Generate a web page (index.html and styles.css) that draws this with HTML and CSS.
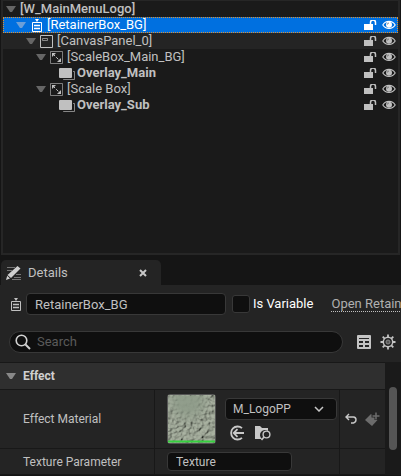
FILE: index.html
```html
<!DOCTYPE html>
<html lang="en">
<head>
<meta charset="utf-8">
<title>Widget hierarchy and details</title>
<link rel="stylesheet" href="styles.css">
</head>
<body>
<svg class="defs" aria-hidden="true">
  <symbol id="arrow" viewBox="0 0 10 7"><path d="M0 0h10L6 6H4z" fill="currentColor"/></symbol>
  <symbol id="lock" viewBox="0 0 13 11"><path d="M0 4h9v6H0z" fill="currentColor"/><path d="M6.500 4.500V2.500a2.500 2.500 0 0 1 5 0V5" fill="none" stroke="currentColor" stroke-width="1.500"/></symbol>
  <symbol id="eye" viewBox="0 0 14 10"><path d="M.8 5C3.500.2 10.500.2 13.200 5 10.500 9.500 3.500 9.500.8 5z" fill="none" stroke="currentColor" stroke-width="1.100"/><circle cx="7" cy="4.700" r="3" fill="currentColor"/><path d="M5.300 4.500q.2-1.300 1.500-1.500" stroke="#555" stroke-width=".8" fill="none"/></symbol>
  <symbol id="retainer" viewBox="0 0 13 13"><path d="M2.500 3.500h9v9h-9z" fill="none" stroke="currentColor"/><path d="M4 6.500h6M4 9.500h6" stroke="currentColor" stroke-width="1.400"/><path d="M5 0h4L7 3z" fill="currentColor"/></symbol>
  <symbol id="canvas" viewBox="0 0 13 13"><path d="M.5.500h12v12H.5z" fill="none" stroke="currentColor"/><path d="M2.500 3.500h5v2h-5z" fill="none" stroke="currentColor" stroke-width=".8" opacity=".8"/></symbol>
  <symbol id="scale" viewBox="0 0 13 13"><path d="M.5.500h12v12H.5z" fill="none" stroke="currentColor" opacity=".6"/><path d="M2 2h4L2 6zM11 11H7l4-4z" fill="currentColor"/><path d="M3 3l7 7" stroke="currentColor" stroke-dasharray="3 1.500"/></symbol>
  <symbol id="overlay" viewBox="0 0 16 13"><rect width="13" height="10" y="1" rx="1" fill="currentColor"/><path d="M14 4.500h1.500v8H4.500V12" fill="none" stroke="currentColor" opacity=".65"/></symbol>
</svg>

<section class="hierarchy" aria-label="Hierarchy">
  <div class="row level0 strong"><svg class="arrow"><use href="#arrow"/></svg><span class="name">[W_MainMenuLogo]</span></div>
  <div class="row level1 selected"><svg class="arrow"><use href="#arrow"/></svg><svg class="type"><use href="#retainer"/></svg><span class="name">[RetainerBox_BG]</span><button aria-label="Lock"><svg class="lock"><use href="#lock"/></svg></button><button aria-label="Visibility"><svg class="eye"><use href="#eye"/></svg></button></div>
  <div class="row level2 child"><svg class="arrow"><use href="#arrow"/></svg><svg class="type"><use href="#canvas"/></svg><span class="name">[CanvasPanel_0]</span><button aria-label="Lock"><svg class="lock"><use href="#lock"/></svg></button><button aria-label="Visibility"><svg class="eye"><use href="#eye"/></svg></button></div>
  <div class="row level3"><svg class="arrow"><use href="#arrow"/></svg><svg class="type"><use href="#scale"/></svg><span class="name">[ScaleBox_Main_BG]</span><button aria-label="Lock"><svg class="lock"><use href="#lock"/></svg></button><button aria-label="Visibility"><svg class="eye"><use href="#eye"/></svg></button></div>
  <div class="row leaf"><svg class="type wide"><use href="#overlay"/></svg><span class="name">Overlay_Main</span><button aria-label="Lock"><svg class="lock"><use href="#lock"/></svg></button><button aria-label="Visibility"><svg class="eye"><use href="#eye"/></svg></button></div>
  <div class="row level3"><svg class="arrow"><use href="#arrow"/></svg><svg class="type"><use href="#scale"/></svg><span class="name">[Scale Box]</span><button aria-label="Lock"><svg class="lock"><use href="#lock"/></svg></button><button aria-label="Visibility"><svg class="eye"><use href="#eye"/></svg></button></div>
  <div class="row leaf"><svg class="type wide"><use href="#overlay"/></svg><span class="name">Overlay_Sub</span><button aria-label="Lock"><svg class="lock"><use href="#lock"/></svg></button><button aria-label="Visibility"><svg class="eye"><use href="#eye"/></svg></button></div>
</section>

<section class="details" aria-label="Details">
  <header class="tab">
    <svg class="pencil" viewBox="0 0 16 16"><path d="M1 2.500h8M1 5.500h5M10 9.500h5M8 12.500h7M6 14.500h9" stroke="#777"/><path d="M11.500 1l3 2.500L5 13l-3.500-3z" fill="#d0d0d0"/><path d="M1.200 10.800L4 13.500 0 15z" fill="#d0d0d0"/></svg>
    <span class="tab-title">Details</span>
    <button aria-label="Close"><svg class="close" viewBox="0 0 8 8"><path d="M1 1l6 6M7 1L1 7" stroke="#c8c8c8" stroke-width="2"/></svg></button>
  </header>
  <div class="body">
    <div class="identity">
      <svg class="type"><use href="#retainer"/></svg>
      <input class="field widget-name" aria-label="Widget name" value="RetainerBox_BG">
      <label class="variable"><input type="checkbox">Is Variable</label>
      <a class="open" href="#retainer">Open Retain</a>
    </div>
    <div class="filter">
      <label class="search">
        <svg class="magnifier" viewBox="0 0 16 16"><circle cx="6.500" cy="6.500" r="5.300" fill="none" stroke="#d0d0d0" stroke-width="1.600"/><path d="M10.500 10.500L15 15" stroke="#d0d0d0" stroke-width="2"/></svg>
        <input type="search" placeholder="Search" aria-label="Search">
      </label>
      <button aria-label="Property matrix"><svg class="matrix" viewBox="0 0 14 14"><rect width="14" height="14" rx="1" fill="#c4c4c4"/><path d="M2 3h10v1H2zM2 6h4v2H2zM8 6h4v2H8zM2 10h4v2H2zM8 10h4v2H8z" fill="#242424"/></svg></button>
      <button aria-label="Settings"><svg class="gear" viewBox="0 0 16 16"><g stroke="#c4c4c4" fill="none"><path d="M8 .5v15M.5 8h15M2.700 2.700l10.600 10.600M13.300 2.700L2.700 13.300" stroke-width="1.800"/><circle cx="8" cy="8" r="4.700" fill="#242424" stroke-width="1.500"/><circle cx="8" cy="8" r="2" fill="#555" stroke="#888"/></g></svg></button>
    </div>
    <div class="properties">
      <div class="grid">
        <h2 class="category"><svg class="arrow"><use href="#arrow"/></svg>Effect</h2>
        <div class="property">
          <div class="label">Effect Material</div>
          <div class="value asset">
            <svg class="thumb" viewBox="0 0 48 48" role="img" aria-label="M_LogoPP thumbnail">
              <defs>
                <filter id="stone" x="0" y="0" width="100%" height="100%"><feTurbulence type="fractalNoise" baseFrequency=".28" numOctaves="3" seed="11"/><feDiffuseLighting surfaceScale="3" diffuseConstant="1.200" lighting-color="#a6ad9f"><feDistantLight azimuth="225" elevation="50"/></feDiffuseLighting></filter>
                <radialGradient id="smooth" cx=".42" cy=".12" r=".5"><stop offset=".4" stop-color="#8f9c8a" stop-opacity=".9"/><stop offset="1" stop-color="#8f9c8a" stop-opacity="0"/></radialGradient>
              </defs>
              <rect width="48" height="48" filter="url(#stone)"/><rect width="48" height="48" fill="#8b9785" opacity=".25"/><rect width="48" height="48" fill="url(#smooth)"/><path d="M0 46h48v2H0z" fill="#36d03f"/>
            </svg>
            <div class="picker">
              <select class="field" aria-label="Effect Material"><option>M_LogoPP</option></select>
              <div class="actions">
                <button aria-label="Use selected asset"><svg class="use" viewBox="0 0 16 16"><path d="M13 3.200A6.500 6.500 0 1 0 13 12.800M15 8H5M8.500 4.200L4.700 8l3.800 3.800" fill="none" stroke="#c8c8c8" stroke-width="1.800"/></svg></button>
                <button aria-label="Browse to asset"><svg class="use" viewBox="0 0 16 16"><path d="M0 1h5l2 2h6v3a5 5 0 0 0-6 8H0z" fill="#c8c8c8"/><circle cx="11.500" cy="9.500" r="3.400" fill="#242424" stroke="#c8c8c8" stroke-width="1.400"/><path d="M9 12L6.500 15" stroke="#c8c8c8" stroke-width="1.600"/></svg></button>
              </div>
            </div>
          </div>
          <div class="extra">
            <button aria-label="Reset to default"><svg class="reset" viewBox="0 0 12 12"><path d="M4 1L1 4l3 3M1 4h7.500q2.500.3 2.500 2.800T8.500 10H6" fill="none" stroke="#c8c8c8" stroke-width="1.400"/></svg></button>
            <button aria-label="Add keyframe"><svg class="key" viewBox="0 0 15 15"><path d="M6 2l6.500 6L7 14 0 8z" fill="#6c6c6c"/><path d="M11 0v8M6.500 4h8" stroke="#242424" stroke-width="3"/><path d="M11 .5v7M7.500 4h7" stroke="#6c6c6c" stroke-width="1.500"/></svg></button>
          </div>
        </div>
        <div class="property">
          <label class="label" for="texture">Texture Parameter</label>
          <div class="value"><input id="texture" class="field texture" value="Texture"></div>
          <div class="extra"></div>
        </div>
      </div>
      <div class="scroll"><div class="handle"></div></div>
    </div>
  </div>
</section>
</body>
</html>
```
FILE: styles.css
```css
* { box-sizing: border-box; }
body {
  margin: 0;
  background: #151515;
  color: #c0c0c0;
  font: 13px/16px Roboto, sans-serif;
  overflow: hidden;
}
svg { display: block; flex: none; overflow: visible; }
.defs { position: absolute; width: 0; height: 0; }
button { padding: 0; border: 0; background: none; color: inherit; display: block; flex: none; }
input, select { font: inherit; color: inherit; }

.hierarchy {
  height: 255px;
  margin: 0 1px;
  border: solid #262626;
  border-width: 1px 2px 2px;
  background: #1a1a1a;
}
.row {
  display: flex;
  align-items: center;
  gap: 4px;
  height: 16px;
  padding-right: 2px;
}
.name { flex: 1; white-space: nowrap; }
.strong { font-weight: 500; }
.leaf { font-weight: 700; padding-left: 56px; }
.level0 { padding-left: 3px; }
.level1 { padding-left: 13px; }
.level2 { padding-left: 23px; }
.level3 { padding-left: 33px; }
.arrow { width: 10px; height: 7px; color: #666; }
.type { width: 13px; height: 13px; }
.type.wide { width: 16px; margin-right: -2px; }
.lock { width: 13px; height: 11px; margin-right: 1px; }
.eye { width: 14px; height: 10px; }
.selected {
  background: #0070e0;
  color: #fff;
  outline: 1px dotted #e09030;
  outline-offset: -1px;
}
.selected .arrow { color: #6b9fd8; }
.child { background: #242424; }

.details { margin-top: 5px; }
.tab {
  display: flex;
  align-items: center;
  width: 160px;
  height: 25px;
  margin-left: 1px;
  padding: 0 14px 0 5px;
  gap: 6px;
  background: #242424;
  border-radius: 5px 5px 0 0;
}
.pencil { width: 16px; height: 16px; }
.tab-title { flex: 1; }
.close { width: 8px; height: 8px; }
.body { background: #242424; }
.identity {
  display: flex;
  align-items: center;
  padding: 8px 0 0 9px;
  white-space: nowrap;
}
.field {
  height: 22px;
  padding: 0 8px;
  border: 1px solid #383838;
  border-radius: 4px;
  background: #0f0f0f;
  outline: 0;
}
.widget-name { flex: none; width: 51%; margin: 0 6px 0 4px; }
.variable { display: flex; align-items: center; gap: 3px; color: #fff; margin-right: 18px; }
.variable input {
  appearance: none;
  width: 18px;
  height: 18px;
  margin: 0;
  border: 1px solid #383838;
  border-radius: 3px;
  background: #0f0f0f;
}
.open { color: #b0b0b0; text-decoration: none; border-bottom: 1px dotted #c0c0c0; line-height: 15px; }
.filter { display: flex; align-items: center; padding: 16px 5px 9px 9px; }
.search {
  flex: 1;
  display: flex;
  align-items: center;
  gap: 6px;
  height: 22px;
  margin-right: 14px;
  padding: 0 5px;
  border: 1px solid #383838;
  border-radius: 11px;
  background: #0f0f0f;
}
.search input { flex: 1; min-width: 0; padding: 0; border: 0; background: none; outline: 0; }
.search input::placeholder { color: #5a5a5a; }
.magnifier { width: 16px; height: 16px; }
.matrix { width: 14px; height: 14px; margin-right: 9px; }
.gear { width: 16px; height: 16px; }

.properties { display: flex; }
.grid { flex: 1; font-size: 12px; border-top: 1px solid #181818; }
.category {
  display: flex;
  align-items: center;
  gap: 7px;
  height: 27px;
  margin: 0;
  padding-left: 6px;
  background: #2f2f2f;
  border-bottom: 1px solid #181818;
  font-size: 12px;
  font-weight: 700;
  color: #d0d0d0;
}
.category .arrow { color: #888; }
.property {
  display: grid;
  grid-template-columns: 40% 1fr 45px;
  border-bottom: 1px solid #181818;
}
.property > * { display: flex; align-items: center; }
.label { padding-left: 23px; }
.value { padding: 3px 12px; border: solid #181818; border-width: 0 1px; }
.asset { padding: 4px 2px 4px 12px; gap: 9px; }
.thumb { width: 49px; height: 50px; border: 1px solid #555; border-radius: 3px; }
.picker { flex: 1; min-width: 0; }
.picker select {
  width: 100%;
  padding: 0 3px;
  font-size: 12px;
  appearance: none;
  background-image: url("data:image/svg+xml,%3Csvg xmlns='http://www.w3.org/2000/svg' viewBox='0 0 10 6'%3E%3Cpath d='M1 1l4 4 4-4' fill='none' stroke='%23c8c8c8' stroke-width='1.500'/%3E%3C/svg%3E");
  background-repeat: no-repeat;
  background-size: 10px 6px;
  background-position: right 12px center;
  padding-left: 7px;
}
.actions { display: flex; gap: 10px; padding: 5px 0 0 4px; }
.use { width: 16px; height: 16px; }
.extra { gap: 8px; padding-left: 5px; }
.reset { width: 12px; height: 12px; }
.key { width: 15px; height: 15px; }
.texture { width: 125px; height: 19px; }
.scroll { width: 16px; background: #1a1a1a; padding: 25px 4px 0; }
.handle { height: 63px; border-radius: 4px; background: #555; }
```
